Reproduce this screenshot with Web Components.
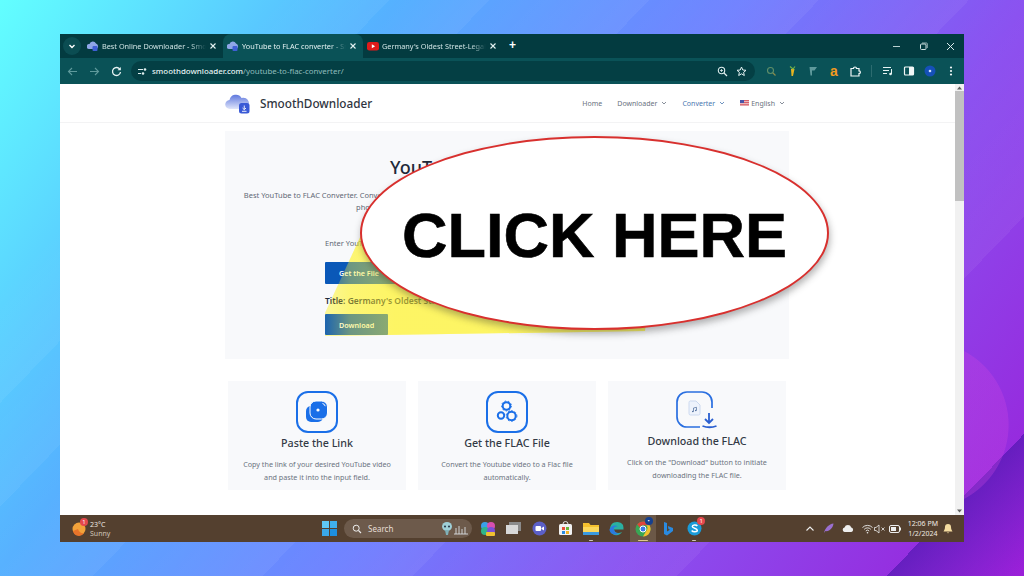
<!DOCTYPE html>
<html>
<head>
<meta charset="utf-8">
<style>
  html, body { margin: 0; height: 576px; overflow: hidden; }
  body {
    position: relative;
    font-family: "Noto Sans", sans-serif;
    background:
      radial-gradient(ellipse 84px 84px at 925px 425px, rgba(205,70,225,.3) 0 99%, transparent 100%),
      linear-gradient(134deg, transparent 1038px, rgba(70,20,170,.6) 1038px, transparent 1130px),
      linear-gradient(134deg, transparent 200px, rgba(255,255,255,.05) 280px, transparent 280px, rgba(255,255,255,.05) 352px, transparent 352px, rgba(255,255,255,.05) 467px, transparent 467px, rgba(255,255,255,.05) 589px, transparent 589px, rgba(255,255,255,.05) 697px, transparent 697px, rgba(255,255,255,.05) 887px, transparent 887px),
      linear-gradient(125deg, #62ffff 0%, #55b0ff 28%, #6f80ff 52%, #8a50f0 72%, #9a1fd8 100%);
  }
  #desk { box-sizing: border-box; height: 576px; padding: 34px 60px; }
</style>
</head>
<body>
<div id="desk">
  <browser-window>
    <site-header></site-header>
    <hero-panel></hero-panel>
    <steps-row>
      <step-card heading="Paste the Link" icon="paste">Copy the link of your desired YouTube video and paste it into the input field.</step-card>
      <step-card heading="Get the FLAC File" icon="gears">Convert the Youtube video to a Flac file automatically.</step-card>
      <step-card heading="Download the FLAC" icon="down">Click on the "Download" button to initiate downloading the FLAC file.</step-card>
    </steps-row>
  </browser-window>
  <task-bar></task-bar>
</div>
<click-callout></click-callout>

<script>
const favicon = `<svg width="12" height="12" viewBox="0 0 12 12"><path d="M2 9a2.5 2.5 0 0 1 .5-5A3.5 3.5 0 0 1 9 3.5 3 3 0 0 1 9.500 9z" fill="#8fa6e8"/><rect x="5.500" y="6" width="5" height="5" rx="1" fill="#3f5fd6"/></svg>`;
const ytIcon = `<svg width="12" height="12" viewBox="0 0 12 12"><rect y="2" width="12" height="8.500" rx="2.300" fill="#e01b1b"/><path d="M4.800 4.300v4l3.300-2z" fill="#fff"/></svg>`;

class browserTab extends HTMLElement {
    connectedCallback() {
        this.attachShadow({ mode: "open" }).innerHTML = `
        <style>
        :host { display: flex; align-items: center; box-sizing: border-box; width: 140px; height: 24px; padding: 0 6px 0 4px; gap: 3px; border-radius: 8px 8px 0 0; color: #cfe3e3; font: 7.300px "Noto Sans", sans-serif; }
        :host([active]) { background: #0a5257; color: #e4f2f2; }
        .t { flex: 1; overflow: hidden; white-space: nowrap; -webkit-mask-image: linear-gradient(90deg,#000 85%,transparent); mask-image: linear-gradient(90deg,#000 85%,transparent); }
        svg { flex: none; }
        </style>
        ${this.getAttribute("yt") !== null ? ytIcon : favicon}
        <span class="t"><slot></slot></span>
        <svg width="8" height="8" viewBox="0 0 8 8"><path d="M1.500 1.500l5 5m0-5l-5 5" stroke="#e4f2f2" stroke-width="1.100"/></svg>`;
    }
}
customElements.define("browser-tab", browserTab);

class browserWindow extends HTMLElement {
    constructor() {
        super();
        this.attachShadow({ mode: "open" }).innerHTML = `
        <style>
        :host { display: block; height: 481px; background: #fff; }
        .tabs { display: flex; align-items: flex-end; height: 24px; background: #033b40; padding-left: 3px; }
        .round { width: 18px; height: 18px; margin: 0 2px 3px 0; border-radius: 50%; background: #0b4d52; display: flex; align-items: center; justify-content: center; }
        .plus { margin: 0 0 7px 6px; color: #fff; font: 700 12px "Liberation Sans", sans-serif; line-height: 12px; }
        .ctrls { margin-left: auto; display: flex; align-items: center; height: 24px; padding-right: 9px; gap: 18px; }
        .bar { display: flex; align-items: center; height: 26px; background: #0a5257; padding-left: 7px; }
        .nav { display: flex; gap: 11px; align-items: center; }
        .omni { display: flex; align-items: center; box-sizing: border-box; width: 624px; height: 20px; margin-left: 9px; border-radius: 10px; background: #043f44; padding: 0 7px; font: 7.900px "Noto Sans", sans-serif; color: #8fbcbc; }
        .omni b { font-weight: 500; color: #e6f3f3; }
        .omni .sp { flex: 1; }
        .exts { display: flex; align-items: center; margin-left: 10px; gap: 9px; }
        .sep { width: 1px; height: 12px; background: #2c6c70; margin: 0 1px; }
        .body { display: flex; height: 431px; }
        .page { flex: 1; overflow: hidden; background: #fff; }
        .scroll { width: 9px; background: #f1f1f1; display: flex; flex-direction: column; align-items: center; }
        .scroll i { display: block; width: 9px; height: 110px; background: #c1c1c1; }
        .scroll svg { display: block; margin: 2px 0 1px; flex: none; }
        .scroll .end { margin: auto 0 2px; }
        </style>
        <div class="tabs">
            <div class="round"><svg width="8" height="8" viewBox="0 0 8 8"><path d="M1.500 3l2.500 2.500L6.500 3" fill="none" stroke="#fff" stroke-width="1.400"/></svg></div>
            <browser-tab>Best Online Downloader - Smooth</browser-tab>
            <browser-tab active>YouTube to FLAC converter - Smooth</browser-tab>
            <browser-tab yt>Germany's Oldest Street-Legal Car</browser-tab>
            <span class="plus">+</span>
            <div class="ctrls">
                <svg width="9" height="9" viewBox="0 0 9 9"><path d="M1 4.500h7" stroke="#b9d0d0"/></svg>
                <svg width="9" height="9" viewBox="0 0 9 9"><rect x="1.500" y="2" width="5.500" height="5.500" rx="1" fill="none" stroke="#cfe0e0"/><path d="M3 1h4.500a.8.800 0 0 1 .8.800V6" fill="none" stroke="#cfe0e0" stroke-width=".7"/></svg>
                <svg width="9" height="9" viewBox="0 0 9 9"><path d="M1 1l7 7m0-7L1 8" stroke="#dcecec"/></svg>
            </div>
        </div>
        <div class="bar">
            <div class="nav">
                <svg width="11" height="11" viewBox="0 0 11 11"><path d="M10 5.500H1.500M5 2L1.500 5.500 5 9" fill="none" stroke="#5f9a9c" stroke-width="1.100"/></svg>
                <svg width="11" height="11" viewBox="0 0 11 11"><path d="M1 5.500h8.500M6 2l3.500 3.500L6 9" fill="none" stroke="#5f9a9c" stroke-width="1.100"/></svg>
                <svg width="11" height="11" viewBox="0 0 11 11"><path d="M9 3.500A4 4 0 1 0 9.500 6" fill="none" stroke="#e6f3f3" stroke-width="1.300"/><path d="M9.800 1v3.300H6.500z" fill="#e6f3f3"/></svg>
            </div>
            <div class="omni">
                <svg width="9" height="9" viewBox="0 0 9 9" style="margin-right:5px"><path d="M0 2.500h5M0 6.500h3" stroke="#dfeeee" stroke-width="1.200"/><circle cx="7" cy="2.500" r="1.300" fill="#dfeeee"/><circle cx="5" cy="6.500" r="1.300" fill="#dfeeee"/></svg>
                <span><b>smoothdownloader.com</b>/youtube-to-flac-converter/</span>
                <span class="sp"></span>
                <svg width="11" height="11" viewBox="0 0 11 11"><circle cx="4.500" cy="4.500" r="3.200" fill="none" stroke="#dfeeee" stroke-width="1.100"/><path d="M7 7l3 3" stroke="#dfeeee" stroke-width="1.300"/><path d="M3 4.500h3M4.500 3v3" stroke="#dfeeee" stroke-width=".8"/></svg>
                <svg width="11" height="11" viewBox="0 0 11 11" style="margin:0 1px 0 8px"><path d="M5.500 1l1.300 3 3.200.3-2.400 2.100.7 3.100-2.800-1.700-2.800 1.700.7-3.100L1 4.300 4.200 4z" fill="none" stroke="#e6f3f3" stroke-width="1"/></svg>
            </div>
            <div class="exts">
                <svg width="12" height="12" viewBox="0 0 12 12"><circle cx="5.500" cy="5.500" r="3" fill="none" stroke="#5f8f6a" stroke-width="1.100"/><path d="M8 8l2.500 2.500" stroke="#8a8a4a" stroke-width="1.200"/></svg>
                <svg width="12" height="12" viewBox="0 0 12 12"><path d="M5 4h3.500L7 11H5.500z" fill="#e6b422"/><path d="M4 1.500l3 2.500 2-2.500" fill="none" stroke="#6fb04a" stroke-width="1.200"/></svg>
                <svg width="12" height="12" viewBox="0 0 12 12"><path d="M2.500 2h7.500L7.500 5.500 5 5.500 5 10.500 3.500 10.500z" fill="#5f9a9c"/></svg>
                <span style="width:12px;text-align:center;color:#f29a1f;font:700 14px/12px 'Liberation Sans',sans-serif">a</span>
                <svg width="12" height="12" viewBox="0 0 12 12"><path d="M2 3.500h2.500a1.500 1.500 0 0 1 3 0H10v2.300a1.400 1.400 0 0 1 0 2.800V11H2z" fill="none" stroke="#f1f8f8" stroke-width="1.200"/></svg>
                <span class="sep"></span>
                <svg width="12" height="12" viewBox="0 0 12 12"><path d="M1 2.500h8M1 5.500h6M1 8.500h4" stroke="#e6f3f3" stroke-width="1.100"/><path d="M9.500 4v5" stroke="#e6f3f3" stroke-width="1"/><circle cx="8.500" cy="9" r="1.300" fill="#e6f3f3"/></svg>
                <svg width="12" height="12" viewBox="0 0 12 12"><rect x="1.500" y="2" width="9" height="8" rx="1" fill="none" stroke="#f1f8f8" stroke-width="1.200"/><rect x="6" y="2" width="4.500" height="8" fill="#f1f8f8"/></svg>
                <svg width="12" height="12" viewBox="0 0 12 12"><circle cx="6" cy="6" r="5.500" fill="#1550b8"/><circle cx="6" cy="6" r="1.300" fill="#cfe0ff"/></svg>
                <svg width="12" height="12" viewBox="0 0 12 12"><circle cx="6" cy="2.500" r="1.100" fill="#f1f8f8"/><circle cx="6" cy="6" r="1.100" fill="#f1f8f8"/><circle cx="6" cy="9.500" r="1.100" fill="#f1f8f8"/></svg>
            </div>
        </div>
        <div class="body">
            <div class="page"><slot></slot></div>
            <div class="scroll">
                <svg width="5" height="4" viewBox="0 0 5 4"><path d="M2.500 .5L5 3.500H0z" fill="#606060"/></svg>
                <i></i>
                <svg class="end" width="5" height="4" viewBox="0 0 5 4"><path d="M2.500 3.500L5 .5H0z" fill="#606060"/></svg>
            </div>
        </div>`;
    }
}
customElements.define("browser-window", browserWindow);

class siteHeader extends HTMLElement {
    constructor() {
        super();
        const caret = `<svg width="6" height="6" viewBox="0 0 6 6" style="margin-left:4px"><path d="M1 2l2 2 2-2" fill="none" stroke="currentColor" stroke-width=".8"/></svg>`;
        this.attachShadow({ mode: "open" }).innerHTML = `
        <style>
        :host { display: block; height: 39px; border-bottom: 1px solid #f3f3f4; box-sizing: border-box; }
        .in { box-sizing: border-box; width: 564px; height: 38px; margin-left: 165px; display: flex; align-items: center; padding-right: 4px; }
        .name { margin-left: 10px; font: 500 11.750px "Noto Sans", sans-serif; color: #2f3540; }
        nav { margin-left: auto; display: flex; align-items: center; gap: 15px; font: 7px "Noto Sans", sans-serif; color: #6a7280; }
        nav span { display: flex; align-items: center; }
        .on { color: #4a78b0; }
        </style>
        <div class="in">
            <svg width="25" height="22" viewBox="0 0 25 22"><defs><linearGradient id="c" x1="0" y1="0" x2="0" y2="1"><stop offset="0" stop-color="#5f78de"/><stop offset="1" stop-color="#dfe5fa"/></linearGradient></defs><path d="M5 17a4.500 4.500 0 0 1-.5-9A6.500 6.500 0 0 1 16.500 6 5.500 5.500 0 0 1 20 17z" fill="url(#c)"/><rect x="14" y="11" width="10.500" height="10.500" rx="2.500" fill="#3a5ad6"/><path d="M19.250 13.500v4M17.500 16l1.750 1.700L21 16M17 19.300h4.500" fill="none" stroke="#fff" stroke-width=".9"/></svg>
            <span class="name">SmoothDownloader</span>
            <nav>
                <span>Home</span>
                <span>Downloader${caret}</span>
                <span class="on">Converter${caret}</span>
                <span><svg width="9" height="6" viewBox="0 0 9 6" style="margin-right:2px"><rect width="9" height="6" fill="#d8606a"/><path d="M0 1.500h9M0 3.500h9M0 5.300h9" stroke="#f2dede" stroke-width=".7"/><rect width="4" height="3" fill="#4a55a8"/></svg>English${caret}</span>
            </nav>
        </div>`;
    }
}
customElements.define("site-header", siteHeader);

class heroPanel extends HTMLElement {
    constructor() {
        super();
        this.attachShadow({ mode: "open" }).innerHTML = `
        <style>
        :host { display: block; position: relative; box-sizing: border-box; width: 564px; height: 228px; margin: 8px 0 0 165px; padding-top: 25px; background: #f8f9fb; color: #2b3340; }
        h1 { margin: 0; text-align: center; font: 500 18px/22px "Noto Sans", sans-serif; color: #1f2a3a; }
        .desc { margin: 11px -20px 0; text-align: center; white-space: nowrap; font: 7.500px/12px "Noto Sans", sans-serif; color: #5f6875; }
        form { position: relative; z-index: 1; display: block; margin: 24px 0 0 100px; }
        label { display: block; font: 7.500px/12px "Noto Sans", sans-serif; color: #5f6875; }
        .btn { display: flex; align-items: center; box-sizing: border-box; padding-left: 14px; color: #fff; background: #0a58b8; font: 600 7.200px "Noto Sans", sans-serif; border-radius: 1px; }
        .get { width: 120px; height: 22px; margin-top: 13px; }
        .title { margin-top: 10px; font: 600 8.500px/14px "Noto Sans", sans-serif; color: #1f2a3a; }
        .dl { width: 63px; height: 21px; margin-top: 6px; }
        .tri { position: absolute; left: 100px; top: 100px; width: 330px; height: 106px; clip-path: polygon(38px 0, 0 82px, 0 105px, 320px 100px, 330px 0); }
        .under { background: rgba(255,243,50,.45); }
        .over { z-index: 2; background: linear-gradient(90deg, rgba(255,243,50,.08) 0, rgba(255,243,50,.4) 25px, rgba(255,243,50,.55) 70px, rgba(255,243,50,.55) 100%); }
        </style>
        <h1>YouTube to FLAC Converter</h1>
        <p class="desc">Best YouTube to FLAC Converter. Convert YouTube videos to high quality FLAC audio files online for free and without limits on your computer, tablet or<br>phone, with no software to install, no sign-up and no limits on how many you convert.</p>
        <div class="tri under"></div>
        <form>
            <label>Enter YouTube URL</label>
            <div class="btn get">Get the File</div>
            <div class="title">Title: Germany's Oldest Street-Legal Car</div>
            <div class="btn dl">Download</div>
        </form>
        <div class="tri over"></div>`;
    }
}
customElements.define("hero-panel", heroPanel);

class stepsRow extends HTMLElement {
    constructor() {
        super();
        this.attachShadow({ mode: "open" }).innerHTML = `
        <style>
        :host { display: grid; grid-template-columns: repeat(3, 178px); gap: 12px; width: 558px; margin: 22px 0 0 168px; }
        </style>
        <slot></slot>`;
    }
}
customElements.define("steps-row", stepsRow);

const stepIcons = {
    paste: `<svg width="42" height="42" viewBox="0 0 42 42"><rect x="1" y="1" width="40" height="40" rx="11" fill="none" stroke="#1a6fe8" stroke-width="2"/><rect x="10" y="15" width="17" height="16" rx="5" fill="#1a6fe8"/><rect x="14" y="10" width="17.500" height="18" rx="6" fill="#1a6fe8" stroke="#fff" stroke-width="1"/><circle cx="22" cy="19" r="1.600" fill="#fff"/><path d="M26.500 12.500a3.500 3.500 0 0 1 2.700 2.700" fill="none" stroke="#fff" stroke-width="1"/></svg>`,
    gears: `<svg width="42" height="42" viewBox="0 0 42 42"><rect x="1" y="1" width="40" height="40" rx="11" fill="none" stroke="#1a6fe8" stroke-width="2"/><g fill="none" stroke="#1a6fe8" stroke-width="2"><circle cx="20.500" cy="15" r="3.800"/><circle cx="15" cy="24.500" r="3.200"/><circle cx="25.500" cy="25" r="4.200"/></g><g fill="none" stroke="#1a6fe8" stroke-width=".9" stroke-dasharray="1.500 2"><circle cx="20.500" cy="15" r="5"/><circle cx="25.500" cy="25" r="5.400"/></g></svg>`,
    down: `<svg width="42" height="42" viewBox="0 0 42 42" style="overflow:visible"><path d="M24 36 H11 A10 10 0 0 1 1 26 V11 A10 10 0 0 1 11 1 H26 A10 10 0 0 1 36 11 V17" fill="none" stroke="#2a6fe0" stroke-width="1.700"/><path d="M15 10h5l4 4v8.500a1.500 1.500 0 0 1-1.500 1.500h-8a1.500 1.500 0 0 1-1.500-1.500V11.500A1.500 1.500 0 0 1 15 10z" fill="#eef3fc" stroke="#c2d2ee" stroke-width=".8"/><path d="M17.500 20.500v-3.500l3-.7v3" fill="none" stroke="#4b6a9a" stroke-width=".7"/><circle cx="16.800" cy="20.500" r=".8" fill="#4b6a9a"/><circle cx="19.800" cy="19.500" r=".8" fill="#4b6a9a"/><path d="M33 22v10M29 28l4 4 4-4M26.500 35q7 2.500 14 0" fill="none" stroke="#2a5fd0" stroke-width="1.800"/></svg>`
};

class stepCard extends HTMLElement {
    connectedCallback() {
        const kind = this.getAttribute("icon");
        this.attachShadow({ mode: "open" }).innerHTML = `
        <style>
        :host { display: flex; flex-direction: column; align-items: center; box-sizing: border-box; height: 109px; padding: 10px 14px 0; background: #f8f9fb; text-align: center; }
        h3 { margin: 3px 0 0; font: 500 10.700px/14px "Noto Sans", sans-serif; color: #333a45; }
        :host([icon=down]) h3 { margin-top: 1px; }
        p { margin: 8px 0 0; font: 7.200px/13px "Noto Sans", sans-serif; color: #6b7380; }
        </style>
        ${stepIcons[kind]}
        <h3>${this.getAttribute("heading")}</h3>
        <p><slot></slot></p>`;
    }
}
customElements.define("step-card", stepCard);

class taskBar extends HTMLElement {
    constructor() {
        super();
        const dot = `<i class="dot"></i>`;
        this.attachShadow({ mode: "open" }).innerHTML = `
        <style>
        :host { display: flex; align-items: center; height: 27px; background: #54402f; color: #efe9e2; font: 7px "Noto Sans", sans-serif; position: relative; }
        .wx { display: flex; align-items: center; gap: 4px; margin-left: 12px; width: 250px; line-height: 9px; }
        .wx small { display: block; font-size: 7px; color: #cfc5b8; }
        .wrap { position: relative; display: flex; }
        .badge { position: absolute; right: -2px; top: -3px; width: 8px; height: 8px; border-radius: 50%; background: #e5484d; color: #fff; font: 6px/8px "Noto Sans", sans-serif; text-align: center; }
        .search { display: flex; align-items: center; box-sizing: border-box; width: 128px; height: 19px; margin-left: 7px; border-radius: 10px; background: #6d5a4b; padding: 0 3px 0 8px; gap: 6px; font-size: 8px; color: #e6dfd6; }
        .search .sp { flex: 1; }
        .apps { display: flex; align-items: center; margin-left: 3px; }
        .app { position: relative; display: flex; align-items: center; justify-content: center; width: 25.800px; height: 27px; }
        .app.on { background: #6b5847; }
        .dot { position: absolute; bottom: 1px; left: 50%; margin-left: -2px; width: 4px; height: 1.500px; border-radius: 1px; background: #cfc5b8; }
        .app.on .dot { width: 10px; margin-left: -5px; background: #e0c98a; }
        .tray { margin-left: auto; display: flex; align-items: center; padding-right: 11px; }
        .tray svg { margin-left: 8px; }
        .tray .tight { margin-left: 1px; }
        .tray .mid { margin-left: 3px; }
        .clock { text-align: center; line-height: 10px; font-size: 7px; margin: 0 5px 0 7px; }
        .tray .bell { margin-left: 0; }
        </style>
        <div class="wx">
            <div class="wrap"><svg width="14" height="16" viewBox="0 0 14 16"><circle cx="7" cy="8" r="6.500" fill="#f2a23a"/><path d="M1 10a6 6 0 0 0 11 2 5 5 0 0 1-6-4z" fill="#e8742a"/></svg><span class="badge">1</span></div>
            <div>23°C<small>Sunny</small></div>
        </div>
        <svg width="15" height="15" viewBox="0 0 15 15"><rect width="7" height="7" fill="#5fc8f5"/><rect x="8" width="7" height="7" fill="#3fb0ee"/><rect y="8" width="7" height="7" fill="#3aa8ea"/><rect x="8" y="8" width="7" height="7" fill="#1d8fdf"/></svg>
        <div class="search">
            <svg width="10" height="10" viewBox="0 0 10 10"><circle cx="4.200" cy="4.200" r="3" fill="none" stroke="#eee" stroke-width="1"/><path d="M6.500 6.500L9 9" stroke="#eee" stroke-width="1.100"/></svg>
            <span>Search</span><span class="sp"></span>
            <svg width="28" height="15" viewBox="0 0 28 15"><ellipse cx="6" cy="5.500" rx="5" ry="4.500" fill="#9fd0d8"/><path d="M4 9h4l-1 5H5z" fill="#7fb0b8"/><circle cx="4" cy="5.500" r="1" fill="#234"/><circle cx="8" cy="5.500" r="1" fill="#234"/><path d="M13 13h14M15 13V7m3 6V5m3 8V8m3 5V6" stroke="#d9dfe2" stroke-width=".9"/></svg>
        </div>
        <div class="apps">
            <div class="app"><svg width="16" height="16" viewBox="0 0 16 16"><circle cx="5" cy="5" r="4" fill="#3aa0e8"/><circle cx="11" cy="5" r="4" fill="#d84fb0"/><circle cx="5" cy="10" r="4" fill="#2fb58a"/><circle cx="11" cy="10" r="4" fill="#7a4fd8"/><rect x="6" y="11" width="9" height="4" rx="1" fill="#f0c030"/></svg></div>
            <div class="app"><svg width="15" height="13" viewBox="0 0 15 13"><rect x="3" width="12" height="9" fill="#8b8b8b"/><rect y="3" width="12" height="9" fill="#d8d8d8"/></svg></div>
            <div class="app"><svg width="15" height="15" viewBox="0 0 15 15"><circle cx="7.500" cy="7.500" r="7" fill="#5b5fc7"/><rect x="3.500" y="5" width="5.500" height="5" rx="1" fill="#fff"/><path d="M9.500 7l2.500-1.500v4L9.500 8z" fill="#fff"/></svg></div>
            <div class="app"><svg width="15" height="15" viewBox="0 0 15 15"><rect x="1" y="3" width="13" height="11" rx="1.500" fill="#f2f2f2"/><path d="M5 3a2.500 2.500 0 0 1 5 0" fill="none" stroke="#ddd"/><rect x="4" y="6" width="3" height="3" fill="#e8503a"/><rect x="8" y="6" width="3" height="3" fill="#6cb83a"/><rect x="4" y="10" width="3" height="3" fill="#2a8ae0"/><rect x="8" y="10" width="3" height="3" fill="#f0b428"/></svg></div>
            <div class="app"><svg width="16" height="14" viewBox="0 0 16 14"><path d="M0 1h6l1.500 2H16v10H0z" fill="#f5c02e"/><rect y="5" width="16" height="8" fill="#fbd75b"/><rect y="10" width="16" height="3" fill="#3a9ae0"/></svg>${dot}</div>
            <div class="app"><svg width="15" height="15" viewBox="0 0 15 15"><path d="M14.500 8.500H5c0 3 4 4.500 8 2.500-1.500 3-6 4.500-9.500 2C.5 11 .5 6 2.500 3.500 5.500 0 12 .5 14 4c.5 1.500.5 3 .5 4.500z" fill="#2ab0a0"/><path d="M.5 8.500C1 5 6 3 9 5.500 6 5 4 6.500 5 8.500c.5 2.500 3 4 5 4.300-4 2-9.500-.3-9.500-4.300z" fill="#2a7ae0"/></svg></div>
            <div class="app on"><svg width="16" height="16" viewBox="0 0 16 16"><circle cx="8" cy="8" r="7.500" fill="#3aa655"/><path d="M8 .5a7.500 7.500 0 0 1 6.500 3.700H8a3.800 3.800 0 0 0-3.400 2.200L2.200 3.300A7.500 7.500 0 0 1 8 .5z" fill="#e0453a"/><path d="M14.500 4.200A7.500 7.500 0 0 1 8 15.500l3.200-5.500a3.800 3.800 0 0 0 0-5.800z" fill="#f5c02e"/><circle cx="8" cy="8" r="3" fill="#3a7ae8" stroke="#fff"/></svg><span class="badge" style="right:3px;top:2px;background:#15408f">•</span>${dot}</div>
            <div class="app"><svg width="10" height="14" viewBox="0 0 10 14"><path d="M1 0l3 1v8.500l3-1.800-1.500-.8L4.800 4 10 6v3l-6 4.500L1 12z" fill="#2a8ae0"/></svg></div>
            <div class="app"><svg width="15" height="15" viewBox="0 0 15 15"><circle cx="7.500" cy="7.500" r="7" fill="#1a9bd8"/><path d="M10.300 5c-1-1.500-5-1.300-5 .6 0 2 5 1.300 5 3.700 0 2-4.500 2-5.600.2" fill="none" stroke="#fff" stroke-width="1.500"/></svg><span class="badge" style="right:2px;top:2px">1</span>${dot}</div>
        </div>
        <div class="tray">
            <svg width="10" height="10" viewBox="0 0 10 10"><path d="M1.500 6.500L5 3l3.500 3.500" fill="none" stroke="#eee" stroke-width="1.100"/></svg>
            <svg width="11" height="11" viewBox="0 0 11 11"><path d="M1 10C2 5 6 1 10.500.5 10 5 6 9 2.500 8z" fill="#9a6fd0"/></svg>
            <svg width="12" height="9" viewBox="0 0 12 9"><path d="M2.500 8a2.300 2.300 0 0 1 0-4.500 3.600 3.600 0 0 1 6.800 0 2.300 2.300 0 0 1 0 4.500z" fill="#eee"/></svg>
            <svg width="11" height="10" viewBox="0 0 11 10"><path d="M.5 3.500a7 7 0 0 1 10 0M2.200 5.300a4.500 4.500 0 0 1 6.600 0M3.800 7a2.300 2.300 0 0 1 3.400 0" fill="none" stroke="#eee" stroke-width=".9"/><circle cx="5.500" cy="8.700" r=".8" fill="#eee"/></svg>
            <svg class="tight" width="12" height="10" viewBox="0 0 12 10"><path d="M.5 3.500H2L5 1v8L2 6.500H.5z" fill="none" stroke="#eee" stroke-width=".8"/><path d="M7.500 3.500l3 3m0-3l-3 3" stroke="#eee" stroke-width=".8"/></svg>
            <svg class="mid" width="12" height="8" viewBox="0 0 12 8"><rect x=".5" y=".5" width="10" height="7" rx="1.500" fill="none" stroke="#eee"/><rect x="2" y="2" width="5" height="4" fill="#eee"/><rect x="11" y="2.500" width="1" height="3" fill="#eee"/></svg>
            <div class="clock">12:06 PM<br>1/2/2024</div>
            <svg class="bell" width="10" height="11" viewBox="0 0 10 11"><path d="M5 1a3 3 0 0 1 3 3c0 2.500 1 3.500 1.500 4.500h-9C1 7.500 2 6.500 2 4a3 3 0 0 1 3-3z" fill="#f5dca0"/><path d="M3.800 9.500a1.300 1.300 0 0 0 2.400 0" fill="#f5dca0"/></svg>
        </div>`;
    }
}
customElements.define("task-bar", taskBar);

class clickCallout extends HTMLElement {
    constructor() {
        super();
        this.attachShadow({ mode: "open" }).innerHTML = `
        <style>
        :host { position: absolute; left: 360px; top: 136px; width: 469px; height: 194px; box-sizing: border-box; padding-top: 3px; display: flex; align-items: center; justify-content: center; background: #fff; border: 2px solid #d8302e; border-radius: 50%; box-shadow: 1px 4px 7px rgba(40,40,40,.35); z-index: 5; }
        span { font: 700 63px "Liberation Sans", sans-serif; color: #000; white-space: nowrap; -webkit-text-stroke: .6px #000; }
        </style>
        <span>CLICK HERE</span>`;
    }
}
customElements.define("click-callout", clickCallout);
</script>
</body>
</html>
